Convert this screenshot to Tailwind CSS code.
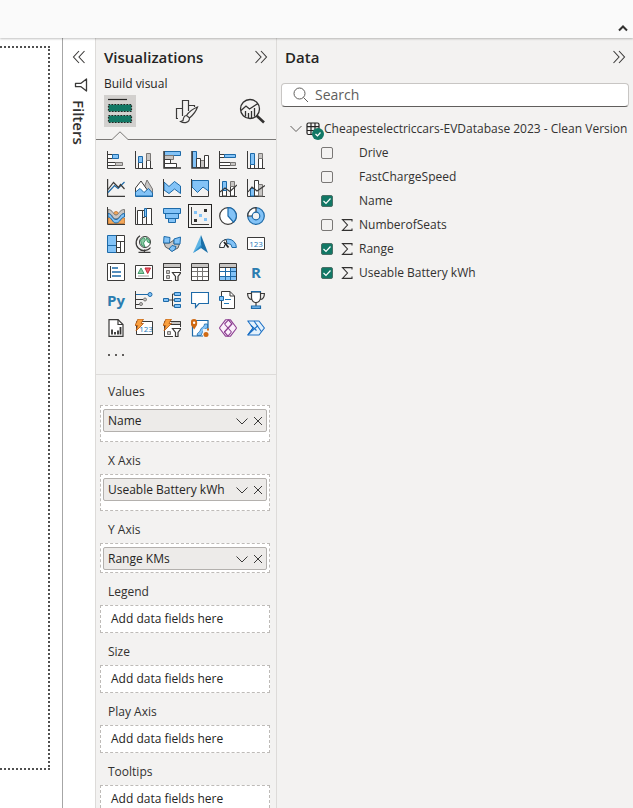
<!DOCTYPE html>
<html lang="en">
<head>
<meta charset="utf-8">
<meta name="viewport" content="width=device-width, initial-scale=1">
<title>Report editor</title>
<script src="https://cdn.jsdelivr.net/npm/@tailwindcss/browser@4"></script>
</head>
<body class="flex h-screen flex-col overflow-hidden bg-white font-['Open_Sans','Noto_Sans',sans-serif] text-xs text-[#323130]">
<header class="relative z-10 flex h-[38px] shrink-0 items-end justify-end bg-[#fafafa] px-1 pb-1 shadow-[0_1px_2px_rgba(0,0,0,0.25)]">
  <button type="button" aria-label="Collapse ribbon"><svg class="size-3" viewBox="0 0 12 12" fill="none" stroke="#323130" stroke-width="2"><path d="M2 8.500 6 4.500 10 8.500"/></svg></button>
</header>
<div class="flex min-h-0 flex-1">
  <main class="w-[62px] shrink-0 pt-2 pr-3 pb-[38px]" aria-label="Report canvas">
    <div class="h-full border-y-2 border-r-2 border-dotted border-[#505050]"></div>
  </main>

  <aside class="flex w-[33px] shrink-0 flex-col items-center border-l border-[#a6a6a6] pt-3">
    <button type="button" aria-label="Expand filters"><svg class="h-3.5 w-3.5" viewBox="0 0 14 14" fill="none" stroke="#3b3a39" stroke-width="1.100"><path d="M7 1 1.500 7 7 13M12.500 1 7 7 12.500 13"/></svg></button>
    <svg class="mt-3.5 ml-1 size-3.5" viewBox="0 0 14 14" fill="none" stroke="#3b3a39" stroke-width="1.300"><path d="M12.500 1V13L7 8.700H1.500V5.300H7Z" stroke-linejoin="round"/></svg>
    <h2 class="mt-2 text-[15px] font-semibold leading-5 [writing-mode:vertical-rl]">Filters</h2>
  </aside>

  <section class="w-[182px] shrink-0 overflow-hidden border-x border-[#dddbd9] bg-[#f3f2f1]">
    <div class="flex h-10 items-center justify-between pr-2 pb-0.5 pl-2">
      <h2 class="text-[15px] font-semibold text-[#252423]">Visualizations</h2>
      <button type="button" aria-label="Collapse visualizations"><svg class="size-3.5" viewBox="0 0 14 14" fill="none" stroke="#3b3a39" stroke-width="1.100"><path d="M1.500 1 7 7 1.500 13M7 1 12.500 7 7 13"/></svg></button>
    </div>
    <h3 class="h-[17px] pl-2 text-xs leading-3 font-medium text-[#252423]">Build visual</h3>
    <div class="flex justify-between pr-2 pl-2">
      <button type="button" aria-label="Build visual" class="bg-[#d2d0ce]"><svg class="size-8" viewBox="0 0 32 32"><path d="M4 4.500H23" stroke="#252423" stroke-width="1.200"/><g fill="#117865" stroke="#252423" stroke-width="1.200" stroke-dasharray="1.500 1.500"><rect x="4.500" y="9.500" width="23" height="7"/><rect x="4.500" y="20.500" width="23" height="7"/></g></svg></button>
      <button type="button" aria-label="Format visual"><svg class="size-8" viewBox="0 0 32 32" fill="none" stroke="#3b3a39" stroke-width="1.200"><path d="M8 23.500H6.500V13.500H12.500M12.500 21V5.500H18.500V16M18.500 10.500H24.500V12M12.500 13V20"/><path fill="#f3f2f1" d="M27.500 12C22.500 14 18.500 17.500 16.500 20.500L19.500 23C23 20 26 16.500 27.500 12ZM16.500 20.500C13.500 20.500 13.500 23.500 13 25.500L10.500 26.500C14 28.500 19.500 28 19.500 23"/></svg></button>
      <button type="button" aria-label="Analytics"><svg class="size-8" viewBox="0 0 32 32" fill="none" stroke="#323130" stroke-width="1.300"><circle cx="14" cy="14" r="9.500"/><path d="M5 15.500 10 11 13.500 14 22 8.500M9.500 21.500V16M12.500 23V18M15.500 23V16M18.500 21.500V13"/><path d="M20.500 20.500 28 27.500" stroke-width="2.600"/></svg></button>
    </div>
    <svg class="mt-1 h-[9px] w-full" viewBox="0 0 180 9" preserveAspectRatio="xMinYMin slice" fill="none" stroke="#7a7876" stroke-width="1"><path d="M0 8.500H16L24 .8 32 8.500H400"/></svg>

    <div class="mt-1.5 ml-1.5 grid w-[168px] grid-cols-6 [&>button]:grid [&>button]:h-7 [&>button]:place-items-center [&_svg]:size-[18px]">
      <!-- bar and column charts -->
      <button type="button" aria-label="Stacked bar chart"><svg viewBox="0 0 18 18" fill="none" stroke="#3b3a39"><path d="M.5 0V17.500H18"/><path d="M1 3.500H5.500V7.500H1M1 11.500H8.500V14.500H1" fill="#fff"/><path d="M5.500 3.500H11.500V7.500H5.500Z" fill="#83c3f7" stroke="#1d6aa8"/><path d="M8.500 11.500H15.500V14.500H8.500Z" fill="#c8c6c4" stroke="#797775"/></svg></button>
      <button type="button" aria-label="Stacked column chart"><svg viewBox="0 0 18 18" fill="none" stroke="#3b3a39"><path d="M.5 0V17.500H18"/><path d="M3.500 17V11.500H7.500V17M11.500 17V9.500H15.500V17" fill="#fff"/><path d="M3.500 5.500H7.500V11.500H3.500Z" fill="#83c3f7" stroke="#1d6aa8"/><path d="M11.500 2.500H15.500V9.500H11.500Z" fill="#c8c6c4" stroke="#797775"/></svg></button>
      <button type="button" aria-label="Clustered bar chart"><svg viewBox="0 0 18 18" fill="none" stroke="#3b3a39"><path d="M1.500 .5H17.500V4.500H1.500Z" fill="#83c3f7" stroke="#1d6aa8"/><path d="M1.500 4.500H10.500V8.500H1.500Z" fill="#c8c6c4" stroke="#797775"/><path d="M1.500 8.500H7.500V12.500H1.500ZM1.500 12.500H13.500V16.500H1.500Z" fill="#fff"/><path d="M1 0V17H18" stroke-width="1.500"/></svg></button>
      <button type="button" aria-label="Clustered column chart"><svg viewBox="0 0 18 18" fill="none" stroke="#3b3a39"><path d="M1.500 .5H5.500V16.500H1.500Z" fill="#83c3f7" stroke="#1d6aa8"/><path d="M9.500 9.500H13.500V16.500H9.500Z" fill="#c8c6c4" stroke="#797775"/><path d="M5.500 7.500H9.500V16.500H5.500ZM13.500 4.500H17.500V16.500H13.500Z" fill="#fff"/><path d="M1 0V17H18" stroke-width="1.500"/></svg></button>
      <button type="button" aria-label="100% stacked bar chart"><svg viewBox="0 0 18 18" fill="none" stroke="#3b3a39"><path d="M.5 0V17.500H18"/><path d="M1 3.500H5.500V6.500H1M1 11.500H11.500V14.500H1" fill="#fff"/><path d="M5.500 3.500H16.500V6.500H5.500Z" fill="#83c3f7" stroke="#1d6aa8"/><path d="M11.500 11.500H16.500V14.500H11.500Z" fill="#c8c6c4" stroke="#797775"/></svg></button>
      <button type="button" aria-label="100% stacked column chart"><svg viewBox="0 0 18 18" fill="none" stroke="#3b3a39"><path d="M.5 0V17.500H18"/><path d="M3.500 17V13.500H7.500V17M11.500 17V7.500H15.500V17" fill="#fff"/><path d="M3.500 2.500H7.500V13.500H3.500Z" fill="#83c3f7" stroke="#1d6aa8"/><path d="M11.500 2.500H15.500V7.500H11.500Z" fill="#c8c6c4" stroke="#797775"/></svg></button>

      <!-- line and area charts -->
      <button type="button" aria-label="Line chart"><svg viewBox="0 0 18 18" fill="none" stroke="#3b3a39" stroke-width="1.200"><path d="M.6 0V17.400H18"/><path d="M1 13.500 7.500 6.500 11 9.500 17.500 3" stroke="#1d6aa8"/><path d="M1 10.500 6.500 3.500 11.500 8.500 13.500 5.500 17.500 10"/></svg></button>
      <button type="button" aria-label="Area chart"><svg viewBox="0 0 18 18" fill="none" stroke-linejoin="round"><path d="M7 14 12 1 17.500 10V17H7Z" fill="#c8c6c4" stroke="#797775"/><path d="M.5 17V9L6 2 13 12V17Z" fill="#fff" stroke="#3b3a39"/><path d="M.5 17V13L5 9.500 9 13.500 13.500 9.500 17.500 14V17Z" fill="#83c3f7" stroke="#1d6aa8"/><path d="M.5 17.500H18" stroke="#1d6aa8"/></svg></button>
      <button type="button" aria-label="Stacked area chart"><svg viewBox="0 0 18 18"><path d="M1 3 6 7.500 11.500 2.500 17.500 7V14.500L11.500 10 6 14.500 1 11Z" fill="#83c3f7" stroke="#1d6aa8"/><path d="M.5 0V17.500H18" fill="none" stroke="#3b3a39"/></svg></button>
      <button type="button" aria-label="100% stacked area chart"><svg viewBox="0 0 18 18"><path d="M1 1.500H17.500V12L12 8 6.500 13.500 1 8Z" fill="#83c3f7" stroke="#1d6aa8"/><path d="M.5 0V17.500H17.500V12" fill="none" stroke="#3b3a39"/></svg></button>
      <button type="button" aria-label="Line and stacked column chart"><svg viewBox="0 0 18 18" fill="none" stroke="#3b3a39"><path d="M.5 0V17.500H18"/><path d="M3.500 11.500H7.500V17H3.500ZM11.500 7.500H15.500V17H11.500Z" fill="#fff"/><path d="M3.500 2.500H7.500V11.500H3.500Z" fill="#83c3f7" stroke="#1d6aa8"/><path d="M11.500 2.500H15.500V7.500H11.500Z" fill="#c8c6c4" stroke="#797775"/><path d="M1 13 6 9 11 12.500 18 6" stroke-width="1.200"/></svg></button>
      <button type="button" aria-label="Line and clustered column chart"><svg viewBox="0 0 18 18" fill="none" stroke="#3b3a39"><path d="M.5 0V17.500H18"/><path d="M3.500 9.500H7.500V17H3.500Z" fill="#83c3f7" stroke="#1d6aa8"/><path d="M7.500 1.500H11.500V17H7.500Z" fill="#fff"/><path d="M11.500 5.500H15.500V17H11.500Z" fill="#c8c6c4" stroke="#797775"/><path d="M1 13 5 8 10 12 18 6.500" stroke-width="1.200"/></svg></button>

      <!-- flow, scatter and circular charts -->
      <button type="button" aria-label="Ribbon chart"><svg viewBox="0 0 18 18" fill="none"><path d="M1 11C5 11 6 4.500 9 4.500S13 11 17.500 11V16.500H1Z" fill="#f2a65a" stroke="#b5651d" stroke-width=".7"/><path d="M1 2.500C6 2.500 6 8 9 8S12 2.500 17.500 2.500V6.500C13 6.500 13 12 9 12S6 6.500 1 6.500Z" fill="#c8c6c4" stroke="#797775"/><path d="M1 6.500C5 6.500 5 12.500 9 12.500S13 6.500 17.500 6.500V10C14 10 13 16 9 16S5 10 1 10Z" fill="#83c3f7" stroke="#1d6aa8"/><path d="M.5 0V17.500H18" stroke="#3b3a39"/></svg></button>
      <button type="button" aria-label="Waterfall chart"><svg viewBox="0 0 18 18" fill="none" stroke="#3b3a39"><path d="M.5 0V17.500H18"/><path d="M2.500 3.500H7.500V17.500H2.500ZM11.500 1.500H16.500V17.500H11.500Z" fill="#fff"/><path d="M7.500 3.500H9.500V10.500H7.500Z"/><path d="M9.500 1.500H11.500V9.500H9.500Z" fill="#83c3f7" stroke="#1d6aa8"/></svg></button>
      <button type="button" aria-label="Funnel"><svg viewBox="0 0 18 18" fill="#83c3f7" stroke="#1d6aa8"><path d="M.5 1.500H17.500V6.500H.5ZM2.500 6.500H15.500V11.500H2.500ZM5.500 11.500H12.500V15.500H5.500Z"/></svg></button>
      <button type="button" aria-label="Scatter chart" aria-pressed="true" class="outline outline-1 -outline-offset-3 outline-[#252423]"><svg viewBox="0 0 18 18"><path d="M.5 0V17.500H18" fill="none" stroke="#3b3a39"/><path d="M13 2h3v3h-3zM3 12h3v3H3z" fill="#323130"/><path d="M3 4h3v3H3zM8 7h3v3H8zM13 11h3v3h-3z" fill="#83c3f7"/></svg></button>
      <button type="button" aria-label="Pie chart"><svg viewBox="0 0 18 18" stroke-width="1.200"><circle cx="9" cy="9" r="8.300" fill="#fff" stroke="#3b3a39"/><path d="M9 .7A8.300 8.300 0 0 1 14.500 15.200L9 9Z" fill="#83c3f7" stroke="#1d6aa8"/></svg></button>
      <button type="button" aria-label="Donut chart"><svg viewBox="0 0 18 18" stroke-width="1.200"><circle cx="9" cy="9" r="8.300" fill="#83c3f7" stroke="#1d6aa8"/><path d="M9 .7A8.300 8.300 0 0 0 .7 9H5L9 5Z" fill="#fff" stroke="#3b3a39"/><circle cx="9" cy="9" r="3.800" fill="#f3f2f1" stroke="#1d6aa8"/></svg></button>

      <!-- maps, gauges and cards -->
      <button type="button" aria-label="Treemap"><svg viewBox="0 0 18 18"><path d="M.5 .5H9.500V17.500H.5Z" fill="#83c3f7"/><path d="M9.500 .5H17.500V17.500H9.500Z" fill="#fff"/><path d="M.5 10.500H9.500M.5 .5H9.500V17.500H.5Z" fill="none" stroke="#1d6aa8"/><path d="M9.500 .5H17.500V17.500H9.500ZM9.500 6.500H17.500M13.500 6.500V17.500M9.500 12.500H13.500" fill="none" stroke="#3b3a39"/></svg></button>
      <button type="button" aria-label="Map"><svg viewBox="0 0 18 18" fill="none"><circle cx="10" cy="7" r="5.500" fill="#fff" stroke="#3b3a39"/><path d="M5.500 5 9 2.500 10.500 5 8.500 8 10 12 6.500 10ZM11 2.500 14.500 5 14.800 8 12.500 7Z" fill="#8ac9a3" stroke="#2a8a55" stroke-width=".8"/><path d="M5 .8A8 8 0 1 0 15.500 12.500M9.500 14.500V17M3.500 17.400H15.500" stroke="#3b3a39" stroke-width="1.200"/></svg></button>
      <button type="button" aria-label="Filled map"><svg viewBox="0 0 18 18" stroke-linejoin="round"><path d="M1 8 6.500 8 11 5 11 9 16.500 9 15 13 12 14.500 9 16 6 14 2.500 12Z" fill="#c8c6c4" stroke="#605e5c"/><path d="M1 1.500 7 2.500 6.500 8 .6 8ZM11 4 17.500 2 17 9 11 9ZM6 14 9 10.500 13 11.500 12 14.500 9 16.500Z" fill="#83c3f7" stroke="#1d6aa8"/></svg></button>
      <button type="button" aria-label="Azure map"><svg viewBox="0 0 18 18"><path d="M10 0 2 18 10 13Z" fill="#5fb5e5"/><path d="M10 0 17 18 10 13Z" fill="#1a6fa8"/><path d="M2 18 10 13 11 9Z" fill="#2b8cca"/></svg></button>
      <button type="button" aria-label="Gauge"><svg viewBox="0 0 18 18" fill="none"><path d="M.6 12.500A8.400 8.400 0 0 1 17.400 12.500H13A4 4 0 0 0 5 12.500Z" fill="#83c3f7" stroke="#1d6aa8"/><path d="M.6 12.500A8.400 8.400 0 0 1 7 4.500L8 8.500A4 4 0 0 0 5 12.500Z" fill="#fff" stroke="#3b3a39"/><path d="M5 7 9.500 12.500" stroke="#252423" stroke-width="1.800"/></svg></button>
      <button type="button" aria-label="Card"><svg viewBox="0 0 18 18"><path d="M.5 2.500H17.500V14.500H.5Z" fill="#fff" stroke="#3b3a39"/><text x="9" y="12" text-anchor="middle" font-size="8" fill="#1d78b8">123</text></svg></button>

      <!-- tables and scripts -->
      <button type="button" aria-label="Multi-row card"><svg viewBox="0 0 18 18"><path d="M.5 .5H17.500V17.500H.5Z" fill="#fff" stroke="#3b3a39"/><path d="M3.500 3V15" stroke="#3b3a39"/><path d="M5 5H11M5 9H14M5 13H14" stroke="#1d6aa8" stroke-width="1.500"/></svg></button>
      <button type="button" aria-label="KPI"><svg viewBox="0 0 18 18"><path d="M.5 2.500H17.500V15.500H.5Z" fill="#fff" stroke="#3b3a39"/><path d="M3 10.500 6 5 9 10.500Z" fill="#8ac9a3" stroke="#2a8a55" stroke-width=".8"/><path d="M10 5H15.500L12.700 10.500Z" fill="#e8606d" stroke="#c0212f"/><path d="M3 13H14" stroke="#a19f9d"/></svg></button>
      <button type="button" aria-label="Slicer"><svg viewBox="0 0 18 18" fill="none" stroke="#3b3a39"><path d="M9 17.500H.5V.5H17.500V8" fill="#fff"/><path d="M1 1H17V4H1Z" fill="#c8c6c4" stroke="none"/><path d="M.5 4.500H17.500M.5 17.500V.5H17.500V8"/><path d="M3.500 7.500H6.500V10.500H3.500ZM3.500 12.500H6.500V15.500H3.500Z" fill="#c8c6c4" stroke="#797775"/><path d="M9.500 9.500H18L15 13.500V17.500H12.500V13.500Z" fill="#fff" stroke-width="1.200"/></svg></button>
      <button type="button" aria-label="Table"><svg viewBox="0 0 18 18"><path d="M.5 .5H17.500V17.500H.5Z" fill="#fff"/><path d="M1 1H17V4H1Z" fill="#c8c6c4"/><path d="M6.500 4V17M11.500 4V17M1 8.500H17M1 13.500H17" stroke="#797775"/><path d="M.5 4.500H17.500M.5 .5H17.500V17.500H.5Z" fill="none" stroke="#3b3a39"/></svg></button>
      <button type="button" aria-label="Matrix"><svg viewBox="0 0 18 18"><path d="M.5 .5H17.500V17.500H.5Z" fill="#fff"/><path d="M1 1H17V4H1Z" fill="#c8c6c4"/><path d="M11.500 4.500H17V17H1V13.500H11.500Z" fill="#83c3f7"/><path d="M6.500 4V17M11.500 4V17M1 8.500H17M1 13.500H17" stroke="#1d6aa8"/><path d="M.5 4.500H17.500M.5 .5H17.500V17.500H.5Z" fill="none" stroke="#3b3a39"/></svg></button>
      <button type="button" aria-label="R script visual" class="text-[15px] leading-4 font-bold text-[#2b7db0]">R</button>

      <!-- AI and narrative visuals -->
      <button type="button" aria-label="Python visual" class="text-[15px] leading-4 font-bold text-[#2b7db0]">Py</button>
      <button type="button" aria-label="Key influencers"><svg viewBox="0 0 18 18" fill="none"><path d="M.5 0V17.500H18M1 8.500H8M1 13.500H5" stroke="#3b3a39"/><path d="M1 3.500H13" stroke="#1d6aa8"/><circle cx="15" cy="3.500" r="2" fill="#83c3f7" stroke="#1d6aa8"/><circle cx="10" cy="8.500" r="1.500" fill="#c8c6c4" stroke="#797775"/><circle cx="6" cy="13" r="1.500" fill="#c8c6c4" stroke="#797775"/></svg></button>
      <button type="button" aria-label="Decomposition tree"><svg viewBox="0 0 18 18"><path d="M6 9H12M9.500 3H12M9.500 15H12M9.500 3V15" fill="none" stroke="#3b3a39"/><path d="M.5 7.500H5.500V10.500H.5ZM11.500 1.500H17.500V4.500H11.500ZM11.500 7.500H17.500V10.500H11.500ZM11.500 13.500H17.500V16.500H11.500Z" fill="#83c3f7" stroke="#1d6aa8"/></svg></button>
      <button type="button" aria-label="Q&amp;A"><svg viewBox="0 0 18 18"><path d="M.5 1.500H17.500V12.500H8L4.500 16.500V12.500H.5Z" fill="#fff" stroke="#1d6aa8" stroke-width="1.200"/></svg></button>
      <button type="button" aria-label="Smart narrative"><svg viewBox="0 0 18 18"><path d="M2.500 .5H11L15.500 5V17.500H2.500Z" fill="#fff" stroke="#3b3a39"/><path d="M11 .5V5H15.500" fill="none" stroke="#3b3a39"/><path d="M.5 5.500H4.500V9.500H.5Z" fill="#83c3f7" stroke="#1d6aa8"/><path d="M6 8.500H12M5 12.500H10" stroke="#1d78b8"/></svg></button>
      <button type="button" aria-label="Metrics"><svg viewBox="0 0 18 18" fill="none" stroke="#3b3a39" stroke-width="1.200"><path d="M4.500 2.500H.6C.6 7 2 8.500 5 8.500M13.500 2.500H17.400C17.400 7 16 8.500 13 8.500"/><path d="M4.500 1V7C5 10 7 11.500 9 11.500S13 10 13.500 7V1Z" fill="#fff"/><path d="M9 11.500V15"/><path d="M4 .6H14M4.500 15H13.500V17.400H4.500Z" fill="#83c3f7" stroke="#1d6aa8"/></svg></button>

      <!-- reports and apps -->
      <button type="button" aria-label="Paginated report"><svg viewBox="0 0 18 18"><path d="M2 .6H11L16 5.500V17.400H2Z" fill="#fff" stroke="#3b3a39" stroke-width="1.200"/><path d="M11 .5V5.500H16" fill="none" stroke="#3b3a39" stroke-width="1.200"/><path d="M5 15.500V10.500M8 15.500V13M11 15.500V11.500M13.500 15.500V8" stroke="#323130" stroke-width="1.800"/></svg></button>
      <button type="button" aria-label="Card (new)"><svg viewBox="0 0 18 18"><path d="M1.500 2.500H17.500V15.500H1.500Z" fill="#fff" stroke="#3b3a39"/><text x="11" y="12.500" text-anchor="middle" font-size="8" fill="#1d78b8">123</text><path d="M3 0H8.500L6 4.500H8.500L1 12 2.800 6.500H0Z" fill="#f9a03f" stroke="#b5560d" stroke-width=".8"/></svg></button>
      <button type="button" aria-label="Slicer (new)"><svg viewBox="0 0 18 18" fill="none" stroke="#3b3a39"><path d="M10 17.500H1.500V2.500H17.500V8" fill="#fff"/><path d="M8 3H17V5H8Z" fill="#c8c6c4" stroke="none"/><path d="M6 5.500H17.500V2.500"/><path d="M4.500 12.500H7.500V15.500H4.500Z" fill="#c8c6c4" stroke="#797775"/><path d="M9.500 9.500H18L15 13.500V17.500H12.500V13.500Z" fill="#fff" stroke-width="1.200"/><path d="M3 0H8.500L6 4.500H8.500L1 12 2.800 6.500H0Z" fill="#f9a03f" stroke="#b5560d" stroke-width=".8"/></svg></button>
      <button type="button" aria-label="ArcGIS maps"><svg viewBox="0 0 18 18"><path d="M1.500 1.500H17V17H1.500Z" fill="#fff" stroke="#1d6aa8" stroke-width="1.200"/><path d="M6 16.500C6 13 9 13.500 9.500 11C10 8 13 9 13.500 5H16.500V9C13 9.500 12 12 10 16.500Z" fill="#83c3f7" stroke="#1d6aa8" stroke-width=".8"/><path d="M12 10H18V18H12Z" fill="#f3f2f1"/><path d="M3 0C6 0 6.500 2 6 6L3.200 10.500 0 6C-.4 2 0 0 3 0Z" fill="#cf6a14"/><circle cx="3.100" cy="3.800" r="1.200" fill="#fff"/><circle cx="15" cy="15.500" r="2.500" fill="#cf6a14"/><path d="M16 9.500h2v2h-2z" fill="#cf6a14"/></svg></button>
      <button type="button" aria-label="Power Apps"><svg viewBox="0 0 18 18" fill="#fbeffb" stroke="#8c3f91" stroke-width="1.100" stroke-linejoin="round"><path d="M6.500 .8H9.500L13 5 5.500 13 9 17.200H6.500L.7 9.500V8.500Z"/><path d="M11.500 .8 17.300 8.500V9.500L11.500 17.200H9L5.500 13 13 5 9.500 .8Z"/><path d="M5.500 5 12.500 13M5.500 5 9.500 .8M9 17.200 12.500 13" fill="none"/></svg></button>
      <button type="button" aria-label="Power Automate"><svg viewBox="0 0 18 18" fill="#e3f1fc" stroke="#1a6fc4" stroke-width="1.100" stroke-linejoin="round"><path d="M.8 2H12L17.400 9 12 16H.8L6 9Z"/><path d="M4 6.500 9.500 11.500M6 9 .8 16M7 2 14.500 12.800M.8 16 11 6.500" fill="none"/></svg></button>
    </div>
    <button type="button" aria-label="More visuals" class="ml-3 flex h-8 w-4 items-start justify-between pt-3"><i class="size-0.5 bg-[#605e5c]"></i><i class="size-0.5 bg-[#605e5c]"></i><i class="size-0.5 bg-[#605e5c]"></i></button>

    <div class="border-t border-[#dddbd9] pr-1.5 pl-1 [&_h4]:h-8 [&_h4]:pt-1.5 [&_h4]:pl-2 [&_h4]:leading-[26px]">
      <h4 class="-mt-0.5">Values</h4>
      <div class="h-[37px] border border-dashed border-[#bebbb8] bg-white px-0.5 pt-[3px]">
        <div class="flex h-[23px] items-center rounded-xs border border-[#b3b0ad] bg-[#edebe9] pl-1 text-[#252423]"><span class="flex-1">Name</span>
          <button type="button" aria-label="Name options" class="mr-1"><svg class="size-3" viewBox="0 0 12 12" fill="none" stroke="#3b3a39"><path d="M.5 3.500 6 9 11.500 3.500"/></svg></button>
          <button type="button" aria-label="Remove Name" class="mr-0.5"><svg class="size-3" viewBox="0 0 12 12" fill="none" stroke="#3b3a39"><path d="M2 2 10 10M10 2 2 10"/></svg></button></div>
      </div>
      <h4>X Axis</h4>
      <div class="h-[37px] border border-dashed border-[#bebbb8] bg-white px-0.5 pt-[3px]">
        <div class="flex h-[23px] items-center rounded-xs border border-[#b3b0ad] bg-[#edebe9] pl-1 text-[#252423]"><span class="flex-1 whitespace-nowrap">Useable Battery kWh</span>
          <button type="button" aria-label="Useable Battery kWh options" class="mr-1"><svg class="size-3" viewBox="0 0 12 12" fill="none" stroke="#3b3a39"><path d="M.5 3.500 6 9 11.500 3.500"/></svg></button>
          <button type="button" aria-label="Remove Useable Battery kWh" class="mr-0.5"><svg class="size-3" viewBox="0 0 12 12" fill="none" stroke="#3b3a39"><path d="M2 2 10 10M10 2 2 10"/></svg></button></div>
      </div>
      <h4>Y Axis</h4>
      <div class="h-[30px] border border-dashed border-[#bebbb8] bg-white px-0.5 pt-[3px]">
        <div class="flex h-[23px] items-center rounded-xs border border-[#b3b0ad] bg-[#edebe9] pl-1 text-[#252423]"><span class="flex-1">Range KMs</span>
          <button type="button" aria-label="Range KMs options" class="mr-1"><svg class="size-3" viewBox="0 0 12 12" fill="none" stroke="#3b3a39"><path d="M.5 3.500 6 9 11.500 3.500"/></svg></button>
          <button type="button" aria-label="Remove Range KMs" class="mr-0.5"><svg class="size-3" viewBox="0 0 12 12" fill="none" stroke="#3b3a39"><path d="M2 2 10 10M10 2 2 10"/></svg></button></div>
      </div>
      <h4>Legend</h4>
      <div class="flex h-7 items-center border border-dashed border-[#bebbb8] bg-white pl-2.5 text-[#252423]">Add data fields here</div>
      <h4>Size</h4>
      <div class="flex h-7 items-center border border-dashed border-[#bebbb8] bg-white pl-2.5 text-[#252423]">Add data fields here</div>
      <h4>Play Axis</h4>
      <div class="flex h-7 items-center border border-dashed border-[#bebbb8] bg-white pl-2.5 text-[#252423]">Add data fields here</div>
      <h4>Tooltips</h4>
      <div class="flex h-7 items-center border border-dashed border-[#bebbb8] bg-white pl-2.5 text-[#252423]">Add data fields here</div>
    </div>
  </section>

  <section class="min-w-0 flex-1 bg-[#f3f2f1]">
    <div class="flex h-10 items-center justify-between pr-[7px] pb-0.5 pl-2">
      <h2 class="text-[15px] font-semibold text-[#252423]">Data</h2>
      <button type="button" aria-label="Collapse data"><svg class="size-3.5" viewBox="0 0 14 14" fill="none" stroke="#3b3a39" stroke-width="1.100"><path d="M1.500 1 7 7 1.500 13M7 1 12.500 7 7 13"/></svg></button>
    </div>
    <label class="mt-[5px] mr-1 ml-1 flex h-6 items-center rounded border border-[#c8c6c4] border-b-[#605e5c] bg-white pl-[11px]">
      <svg class="size-4 shrink-0" viewBox="0 0 16 16" fill="none" stroke="#605e5c"><circle cx="6.500" cy="6.500" r="5.500"/><path d="M10.500 10.500 15 15"/></svg>
      <input type="search" aria-label="Search" placeholder="Search" class="ml-1.5 w-full bg-transparent text-sm leading-5 outline-none placeholder:text-[#605e5c]">
    </label>
    <div class="mt-2.5 [&_label]:flex [&_label]:h-6 [&_label]:items-center [&_label]:pl-11">
      <div class="flex h-6 items-center pl-3">
        <button type="button" aria-label="Collapse table" class="mr-[3px]"><svg class="h-3 w-3.5" viewBox="0 0 14 12" fill="none" stroke="#605e5c"><path d="M1.500 3 7 8.500 12.500 3"/></svg></button>
        <span class="relative mr-1 size-3.5 shrink-0"><svg class="size-3.5" viewBox="0 0 14 14" fill="none" stroke="#252423" stroke-width="1.200"><rect x="1" y="1" width="12" height="11.500" rx="1.500"/><path d="M1 4.700H13M1 8.500H13M5 1V12.500M9 1V12.500"/></svg>
          <svg class="absolute top-1.5 left-1.5 size-3" viewBox="0 0 12 12"><circle cx="6" cy="6" r="6" fill="#117865"/><path d="M3.500 6 5.500 7.800 8.500 4.500" fill="none" stroke="#fff" stroke-width="1.200"/></svg></span>
        <span class="whitespace-nowrap">Cheapestelectriccars-EVDatabase 2023 - Clean Version</span>
      </div>
      <label><span class="relative mr-2 size-3"><input type="checkbox" class="peer block size-3 appearance-none rounded-xs border border-[#797775] checked:bg-[#117865]"></span><span class="mr-1.5 w-3"></span>Drive</label>
      <label><span class="relative mr-2 size-3"><input type="checkbox" class="peer block size-3 appearance-none rounded-xs border border-[#797775] checked:bg-[#117865]"></span><span class="mr-1.5 w-3"></span>FastChargeSpeed</label>
      <label><span class="relative mr-2 size-3"><input type="checkbox" checked class="peer block size-3 appearance-none rounded-xs border border-[#4a6f66] checked:bg-[#117865]"><svg class="pointer-events-none absolute inset-0 hidden size-3 peer-checked:block" viewBox="0 0 12 12" fill="none" stroke="#fff" stroke-width="1.200"><path d="M2.500 6 5 8.500 9.500 3.500"/></svg></span><span class="mr-1.5 w-3"></span>Name</label>
      <label><span class="relative mr-2 size-3"><input type="checkbox" class="peer block size-3 appearance-none rounded-xs border border-[#797775] checked:bg-[#117865]"></span><svg class="mr-1.5 size-3" viewBox="0 0 12 12" fill="none" stroke="#323130" stroke-width="1.100"><path d="M11 2.500V.6H1.500L6.500 6 1.500 11.400H11V9.500"/></svg>NumberofSeats</label>
      <label><span class="relative mr-2 size-3"><input type="checkbox" checked class="peer block size-3 appearance-none rounded-xs border border-[#4a6f66] checked:bg-[#117865]"><svg class="pointer-events-none absolute inset-0 hidden size-3 peer-checked:block" viewBox="0 0 12 12" fill="none" stroke="#fff" stroke-width="1.200"><path d="M2.500 6 5 8.500 9.500 3.500"/></svg></span><svg class="mr-1.5 size-3" viewBox="0 0 12 12" fill="none" stroke="#323130" stroke-width="1.100"><path d="M11 2.500V.6H1.500L6.500 6 1.500 11.400H11V9.500"/></svg>Range</label>
      <label><span class="relative mr-2 size-3"><input type="checkbox" checked class="peer block size-3 appearance-none rounded-xs border border-[#4a6f66] checked:bg-[#117865]"><svg class="pointer-events-none absolute inset-0 hidden size-3 peer-checked:block" viewBox="0 0 12 12" fill="none" stroke="#fff" stroke-width="1.200"><path d="M2.500 6 5 8.500 9.500 3.500"/></svg></span><svg class="mr-1.5 size-3" viewBox="0 0 12 12" fill="none" stroke="#323130" stroke-width="1.100"><path d="M11 2.500V.6H1.500L6.500 6 1.500 11.400H11V9.500"/></svg>Useable Battery kWh</label>
    </div>
  </section>
</div>
</body>
</html>
